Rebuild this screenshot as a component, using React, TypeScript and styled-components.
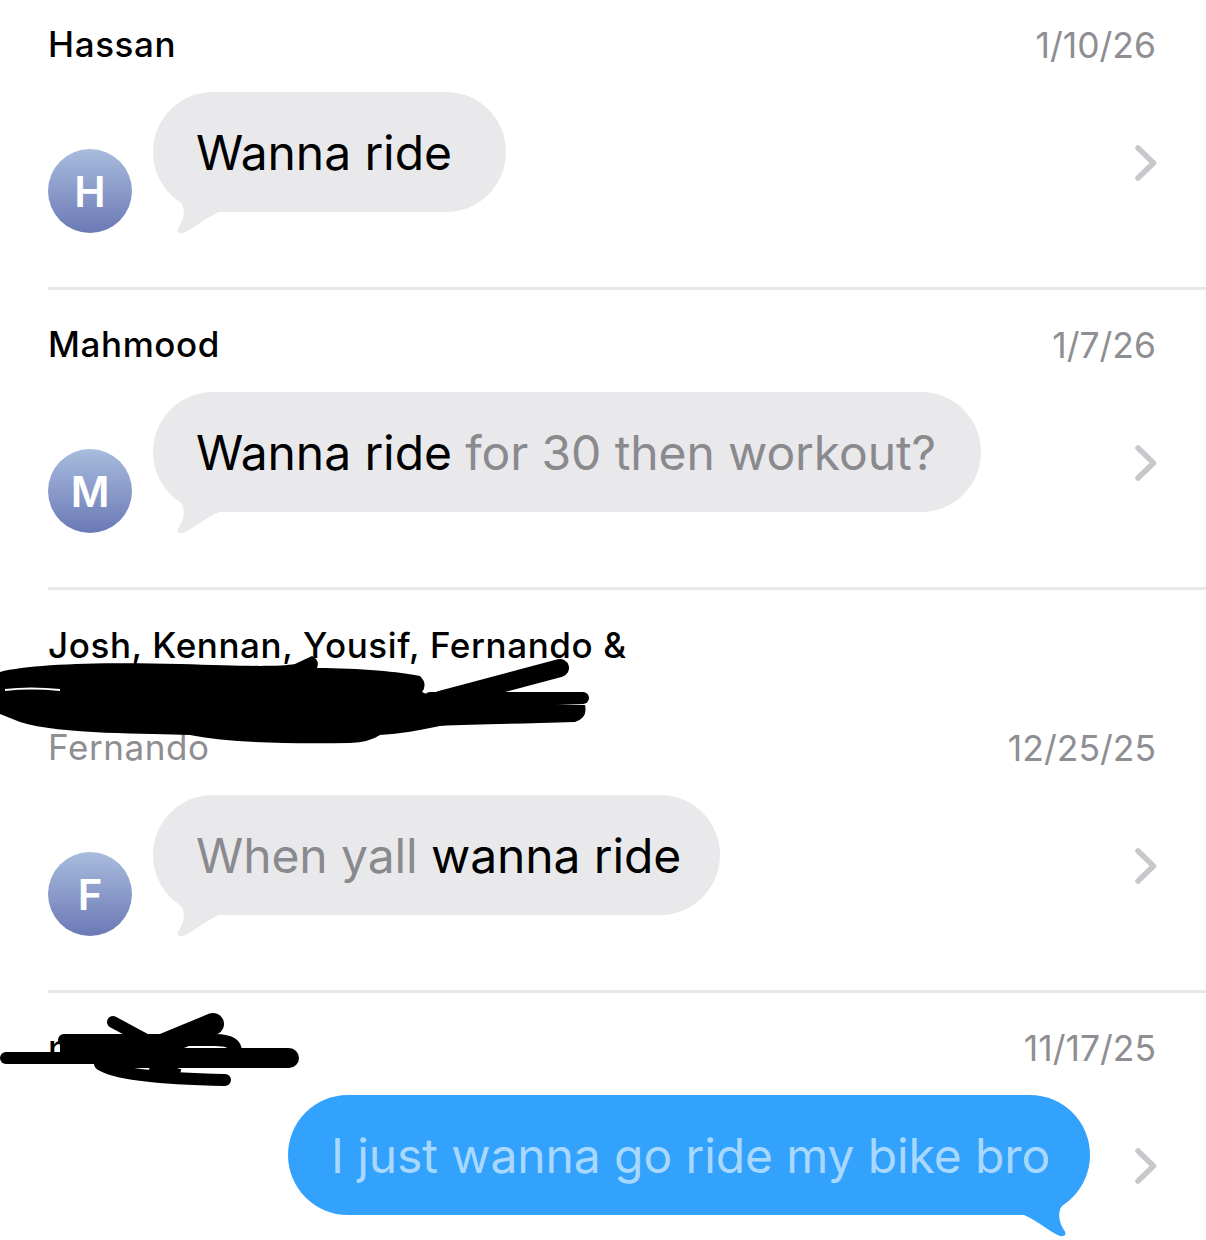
import styled, { createGlobalStyle } from "styled-components"

type Part = { text: string; dim?: boolean }

const GlobalStyle = createGlobalStyle`
  html, body {
    margin: 0;
    background: #fff;
    font-family: Inter, "Liberation Sans", sans-serif;
  }
  #root {
    height: 1240px;
    overflow: hidden;
  }
`

const Page = styled.div`
  width: 1206px;
  position: relative;
`

const Row = styled.section<{ $first?: boolean; $last?: boolean }>`
  margin-left: 48px;
  padding: ${p => (p.$first ? 24 : 34)}px 50px ${p => (p.$last ? 0 : 54)}px 0;
  border-bottom: ${p => (p.$last ? "none" : "3px solid #e8e8ea")};
`

const Header = styled.div`
  display: flex;
  justify-content: space-between;
  align-items: center;
  height: 42px;
`

const Name = styled.div<{ $muted?: boolean }>`
  font-size: 35px;
  line-height: 42px;
  padding-bottom: 2px;
  letter-spacing: 0.6px;
  font-weight: 500;
  color: #000;
  ${p => p.$muted && "font-weight: 400; color: #8e8e93;"}
`

const NameLine = styled.div`
  height: 59px;
`

const DateText = styled.div`
  font-size: 35.5px;
  line-height: 42px;
  padding-top: 2px;
  color: #8e8e93;
`

const Body = styled.div`
  display: flex;
  align-items: center;
  margin-top: 26px;
  height: 141px;
`

const Avatar = styled.div`
  flex: none;
  align-self: flex-end;
  width: 84px;
  height: 84px;
  border-radius: 50%;
  margin-right: 21px;
  display: flex;
  align-items: center;
  justify-content: center;
  background: linear-gradient(#a8bcdd, #6b79b6);
  color: #fff;
  font-size: 42px;
  font-weight: 600;
`

const Bubble = styled.div<{ $sent?: boolean; $paddingRight: number }>`
  position: relative;
  align-self: flex-start;
  height: 120px;
  box-sizing: border-box;
  padding: 0 ${p => p.$paddingRight}px 0 43px;
  border-radius: 60px;
  display: flex;
  align-items: center;
  white-space: pre;
  font-size: 48px;
  letter-spacing: -0.1px;
  background: ${p => (p.$sent ? "#32a2fd" : "#e9e9eb")};
  color: ${p => (p.$sent ? "#a9d8ff" : "#000")};
  ${p => p.$sent && "margin-left: 240px;"}
`

const Dim = styled.span`
  color: #8a8a8e;
`

const TailShape = styled.svg<{ $sent?: boolean }>`
  position: absolute;
  bottom: -24px;
  width: 50px;
  height: 40px;
  fill: ${p => (p.$sent ? "#32a2fd" : "#e9e9eb")};
  ${p => (p.$sent ? "right: 20px; transform: scaleX(-1);" : "left: 20px;")}
`

const Chevron = styled.svg`
  flex: none;
  width: 26px;
  height: 38px;
  margin-left: auto;
  margin-right: -3px;
`

const Scribble = styled.svg<{ $top: number }>`
  position: absolute;
  left: 0;
  top: ${p => p.$top}px;
  display: block;
`

const Tail = (props: { sent?: boolean }) => (
  <TailShape $sent={props.sent} viewBox="0 0 50 40">
    <path d="M4 0 L8 7 C12 12 12 22 6 31 C3 35 5 38 10 37 C20 33 32 22 46 16 L46 0 Z" />
  </TailShape>
)

const Arrow = () => (
  <Chevron viewBox="0 0 26 38">
    <path d="M5 4 L20.5 19 L5 34" fill="none" stroke="#c7c7cc" strokeWidth="5.5" strokeLinecap="round" strokeLinejoin="round" />
  </Chevron>
)

const Message = (props: { parts: Part[]; letter: string; paddingRight: number }) => (
  <Body>
    <Avatar>{props.letter}</Avatar>
    <Bubble $paddingRight={props.paddingRight}>
      {props.parts.map((part, i) => (part.dim ? <Dim key={i}>{part.text}</Dim> : <span key={i}>{part.text}</span>))}
      <Tail />
    </Bubble>
    <Arrow />
  </Body>
)

export default function App() {
  return (
    <Page>
      <GlobalStyle />
      <Row $first>
        <Header>
          <Name>Hassan</Name>
          <DateText>1/10/26</DateText>
        </Header>
        <Message letter="H" paddingRight={54} parts={[{ text: "Wanna ride" }]} />
      </Row>
      <Row>
        <Header>
          <Name>Mahmood</Name>
          <DateText>1/7/26</DateText>
        </Header>
        <Message letter="M" paddingRight={45} parts={[{ text: "Wanna ride" }, { text: " for 30 then workout?", dim: true }]} />
      </Row>
      <Row>
        <Name>Josh, Kennan, Yousif, Fernando &amp;</Name>
        <NameLine />
        <Header>
          <Name $muted>Fernando</Name>
          <DateText>12/25/25</DateText>
        </Header>
        <Message letter="F" paddingRight={39} parts={[{ text: "When yall", dim: true }, { text: " wanna ride" }]} />
      </Row>
      <Row $last>
        <Header>
          <Name>n</Name>
          <DateText>11/17/25</DateText>
        </Header>
        <Body>
          <Bubble $sent $paddingRight={40}>
            I just wanna go ride my bike bro
            <Tail sent />
          </Bubble>
          <Arrow />
        </Body>
      </Row>

      {/* marker scribbles over the hidden names */}
      <Scribble $top={655} width="600" height="100" viewBox="0 655 600 100">
        <path
          d="M0 672 C30 664 100 662 180 664 C240 666 280 667 295 664 L312 656 Q320 660 317 668 C360 668 400 672 420 676 Q428 684 422 692 L440 700 L585 705 Q588 718 575 722 C520 724 470 724 440 726 C420 730 400 734 380 735 Q370 742 350 743 C290 744 230 743 190 735 C150 733 60 735 20 722 L0 714 Z"
          fill="#000"
        />
        <path d="M440 700 L560 668" stroke="#000" strokeWidth="18" strokeLinecap="round" />
        <path d="M430 698 H583" stroke="#000" strokeWidth="12" strokeLinecap="round" />
        <path d="M5 690 Q30 687 60 690" stroke="#fff" strokeWidth="2" fill="none" />
      </Scribble>
      <Scribble $top={1012} width="310" height="80" viewBox="0 1012 310 80">
        <path d="M6 1058 H110" stroke="#000" strokeWidth="12" strokeLinecap="round" />
        <path d="M110 1058 H289" stroke="#000" strokeWidth="20" strokeLinecap="round" />
        <path d="M113 1022 L150 1042" stroke="#000" strokeWidth="12" strokeLinecap="round" />
        <path d="M213 1024 L155 1048" stroke="#000" strokeWidth="22" strokeLinecap="round" />
        <path d="M64 1040 H215 Q236 1040 236 1052" stroke="#000" strokeWidth="12" fill="none" strokeLinecap="round" />
        <path d="M60 1050 H150" stroke="#000" strokeWidth="18" strokeLinecap="butt" />
        <path d="M100 1064 Q120 1078 225 1080" stroke="#000" strokeWidth="12" fill="none" strokeLinecap="round" />
        <path d="M150 1066 L180 1074" stroke="#000" strokeWidth="10" />
      </Scribble>
    </Page>
  )
}
